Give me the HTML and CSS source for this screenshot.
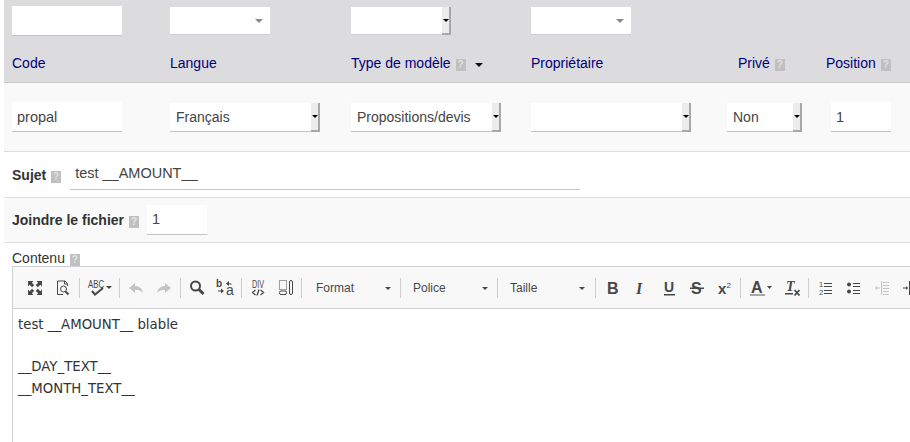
FILE: index.html
```html
<!DOCTYPE html>
<html lang="fr">
<head>
    <meta name="viewport" content="width=device-width, initial-scale=1">
    <title>Modèles d'emails</title>
    <link rel="stylesheet" href="styles.css">
</head>
<body>
    <div class="row cols filter-row">
        <input class="field field-code" type="text">
        <div class="pick pick-filter"><span class="pick-caret"></span></div>
        <div class="pick pick-filter pick-native"><span class="pick-btn"></span></div>
        <div class="pick pick-filter"><span class="pick-caret"></span></div>
    </div>
    <div class="row cols title-row">
        <a class="title">Code</a>
        <a class="title">Langue</a>
        <a class="title">Type de modèle <span class="help">?</span> <span class="sort-down"></span></a>
        <a class="title">Propriétaire</a>
        <a class="title title-prive">Privé <span class="help">?</span></a>
        <a class="title">Position <span class="help">?</span></a>
    </div>
    <div class="row cols value-row">
        <input class="field field-code" type="text" value="propal">
        <div class="pick pick-native pick-lang">Français<span class="pick-btn"></span></div>
        <div class="pick pick-native pick-lang">Propositions/devis<span class="pick-btn"></span></div>
        <div class="pick pick-native pick-owner"><span class="pick-btn"></span></div>
        <div class="pick pick-native pick-prive">Non<span class="pick-btn"></span></div>
        <input class="field field-pos" type="text" value="1">
    </div>
    <div class="row line-row">
        <label class="strong">Sujet <span class="help">?</span></label>
        <input class="field field-subject" type="text" value="test __AMOUNT__">
    </div>
    <div class="row line-row line-odd">
        <label class="strong">Joindre le fichier <span class="help">?</span></label>
        <input class="field field-join" type="text" value="1">
    </div>
    <div class="content-block">
        <div class="content-label">Contenu <span class="help">?</span></div>
        <div class="editor">
            <div class="toolbar">
                <span class="tool">
                    <svg viewBox="0 0 16 16"><path d="M1 1h5.500L4.800 2.700l2.400 2.400-2.100 2.100-2.400-2.400L1 6.500zM15 1H9.500l1.700 1.700-2.400 2.400 2.100 2.100 2.400-2.400L15 6.500zM1 15h5.500l-1.700-1.700 2.400-2.400-2.100-2.100-2.400 2.400L1 9.500zM15 15H9.500l1.700-1.700-2.400-2.400 2.100-2.100 2.400 2.400L15 9.500z"/></svg>
                </span>
                <span class="tool">
                    <svg viewBox="0 0 16 16"><path class="line" d="M12.500 6V3.500L10 1H2.500v13.500H8"/><path class="line" d="M9.500 1v3h3"/><circle class="line" cx="8.500" cy="9" r="3"/><path class="line thick" d="M10.500 11.500l3 3"/></svg>
                </span>
                <i class="sep sep-first"></i>
                <span class="tool tool-wide">
                    <svg class="icon-wide" viewBox="0 0 24 16"><text x="0" y="8" class="tiny" textLength="16" lengthAdjust="spacingAndGlyphs">ABC</text><path class="line check" d="M4 11l3 3.500L15 8"/><path class="mini" d="M18 6h6l-3 3z"/></svg>
                </span>
                <i class="sep"></i>
                <span class="tool off">
                    <svg viewBox="1 0 16 16"><path d="M1 8l6-5v3c4 0 7 2 8 7-2-2.500-4-3-8-3v3z"/></svg>
                </span>
                <span class="tool off">
                    <svg viewBox="2 0 16 16"><path d="M16 8l-6-5v3C6 6 3 8 2 13c2-2.500 4-3 8-3v3z"/></svg>
                </span>
                <i class="sep"></i>
                <span class="tool">
                    <svg viewBox="0 0 16 16"><circle class="line heavy" cx="5.500" cy="6" r="4.500"/><path class="line handle" d="M9 9.500l4.500 4.500"/></svg>
                </span>
                <span class="tool">
                    <svg viewBox="2 0 16 16"><text x="0" y="7" class="tiny-b">b</text><text x="10" y="15" class="big-a">a</text><path class="line" d="M15.500 4H11M2 11h4"/><path d="M13 1v5l-3-2.500zM5 8.500v5l3-2.500z"/></svg>
                </span>
                <i class="sep"></i>
                <span class="tool">
                    <svg viewBox="0 0 16 16"><text x="1" y="8" class="tiny" textLength="12" lengthAdjust="spacingAndGlyphs">DIV</text><path class="line thick-code" d="M4.500 10l-3 2.500 3 2.500M6 15.500l2-6M9.500 10l3 2.500-3 2.500"/></svg>
                </span>
                <span class="tool">
                    <svg viewBox="0 0 16 16"><path class="line dots" d="M.5.500h7v9h-7z"/><rect class="line" x=".5" y="11" width="7" height="3.500" rx="1.500"/><rect class="line" x="10.500" y=".5" width="3" height="14" rx="1.500"/></svg>
                </span>
                <i class="sep sep-tight"></i>
                <span class="combo combo-first">Format<span class="combo-arrow"></span></span>
                <i class="sep sep-tight"></i>
                <span class="combo">Police<span class="combo-arrow"></span></span>
                <i class="sep sep-tight"></i>
                <span class="combo">Taille<span class="combo-arrow"></span></span>
                <i class="sep"></i>
                <span class="tool"><svg viewBox="0 0 16 16"><text x="2" y="14" class="glyph-b">B</text></svg></span>
                <span class="tool"><svg viewBox="0 0 16 16"><text x="3" y="14" class="glyph-i">I</text></svg></span>
                <span class="tool"><svg viewBox="0 0 16 16"><text x="3" y="12" class="glyph-u">U</text><path d="M3 14h11v1.500H3z"/></svg></span>
                <span class="tool"><svg viewBox="0 0 16 16"><text x="2" y="14" class="glyph-b">S</text><path d="M1 7.500h14V9H1z"/></svg></span>
                <span class="tool"><svg viewBox="0 0 16 16"><text x="1" y="14" class="glyph-x">x</text><text x="9.500" y="8" class="glyph-sup">2</text></svg></span>
                <i class="sep"></i>
                <span class="tool tool-color">
                    <svg class="icon-color" viewBox="0 0 28 16"><text x="1" y="13" class="glyph-a">A</text><path class="color-bar" d="M0 14h15v2H0z"/><path class="mini" d="M17 6h5l-2.500 3z"/></svg>
                </span>
                <span class="tool"><svg viewBox="0 0 16 16"><text x="1" y="11" class="glyph-t">T</text><path d="M0 13h8v1.500H0z"/><path class="line thick" d="M9.500 10l5 5.500M14.500 10l-5 5.500"/></svg></span>
                <i class="sep"></i>
                <span class="tool"><svg viewBox="0 0 16 16"><text x="1" y="7" class="tiny-n">1</text><text x="1" y="15" class="tiny-n">2</text><path d="M6 3h8v1H6zM6 6h8v1H6zM6 10h8v1H6zM6 13h8v1H6z"/></svg></span>
                <span class="tool"><svg viewBox="0 0 16 16"><circle cx="3" cy="4.500" r="2"/><circle cx="3" cy="11.500" r="2"/><path d="M7 3h7v1H7zM7 6h7v1H7zM7 10h7v1H7zM7 13h7v1H7z"/></svg></span>
                <span class="tool off"><svg viewBox="0 0 16 16"><path d="M7 1h1v14H7zM9 2h6v1H9zM9 5h6v1H9zM9 8h6v1H9zM9 11h6v1H9zM9 14h6v1H9z"/><path d="M1 7.500h3V6l2 2-2 2V8.500H1z" transform="matrix(-1 0 0 1 7 0)"/></svg></span>
                <span class="tool dark"><svg viewBox="0 0 16 16"><path d="M7 1h1v14H7zM1 7.500h3V6l2 2-2 2V8.500H1zM9 2h6v1H9z"/></svg></span>
            </div>
            <div class="editor-body">
                <p>test __AMOUNT__ blable</p>
                <p>&nbsp;</p>
                <p>__DAY_TEXT__</p>
                <p>__MONTH_TEXT__</p>
            </div>
        </div>
    </div>
</body>
</html>
```

FILE: styles.css
```css
html, body {
    height: 100%;
}

body {
    margin: 0;
    padding-left: 4px;
    background-color: #fff;
    color: #333;
    font-family: "Liberation Sans", Arial, sans-serif;
    font-size: 14px;
    overflow: hidden;
}

.row {
    padding-left: 8px;
    box-sizing: border-box;
}

.cols {
    display: grid;
    grid-template-columns: 158px 181px 180px 196px 99px 84px;
    align-items: center;
}

.filter-row {
    height: 42px;
    background-color: #dcdcdf;
    align-items: start;
    padding-top: 6px;
}

.title-row {
    height: 41px;
    background-color: #dcdcdf;
    border-bottom: 1px solid #c8c8c8;
    padding-top: 1px;
}

.title {
    display: block;
    height: 16px;
    color: #000078;
    line-height: 16px;
    white-space: nowrap;
}

.title-prive {
    padding-left: 11px;
}

.value-row {
    height: 69px;
    background-color: #f9f9f9;
    border-bottom: 1px solid #ddd;
}

.value-row .field {
    padding-bottom: 0;
}

.line-row {
    display: flex;
    align-items: center;
    height: 46px;
    border-bottom: 1px solid #ddd;
}

.line-odd {
    height: 45px;
    background-color: #f9f9f9;
}

.strong {
    font-weight: 700;
    color: #333;
}

.help {
    display: inline-block;
    width: 10px;
    height: 12px;
    margin: 0 2px 0 1px;
    background-color: #c0c0c0;
    color: #e2e2e2;
    font-size: 10px;
    font-weight: 700;
    line-height: 12px;
    text-align: center;
    vertical-align: 0;
}

.sort-down {
    display: inline-block;
    margin-left: 4px;
    border-top: 4px solid #111;
    border-left: 4px solid transparent;
    border-right: 4px solid transparent;
    vertical-align: 1px;
}

.field {
    box-sizing: border-box;
    height: 30px;
    padding: 0 0 2px 5px;
    border: 0;
    border-bottom: 1px solid #c4c4c4;
    background-color: #fff;
    color: #444;
    font-family: inherit;
    font-size: 14.5px;
    outline: none;
}

.field-code {
    width: 110px;
}

.field-pos {
    width: 60px;
    margin-left: 5px;
}

.field-subject {
    width: 510px;
    margin-left: 7px;
    background-color: transparent;
}

.field-join {
    width: 60px;
    margin-left: 6px;
}

.pick {
    position: relative;
    box-sizing: border-box;
    height: 29px;
    padding-left: 6px;
    border-bottom: 1px solid #c4c4c4;
    background-color: #fff;
    color: #444;
    font-size: 14px;
    line-height: 29px;
    white-space: nowrap;
}

.pick-filter {
    width: 100px;
    height: 28px;
    margin-top: 1px;
    border-bottom-color: #d0d0d0;
}

.pick-lang {
    width: 150px;
}

.pick-owner {
    width: 160px;
}

.pick-prive {
    width: 75px;
}

/* fake native arrow, sits over the right end of the select */
.pick-btn {
    position: absolute;
    top: 0;
    right: 0;
    bottom: -1px;
    width: 7px;
    background-color: #ececec;
    border-right: 2px solid #a8a8a8;
    border-bottom: 2px solid #a8a8a8;
    box-sizing: content-box;
}

.pick-btn::after {
    content: "";
    position: absolute;
    top: 12px;
    left: 1px;
    border-top: 3px solid #000;
    border-left: 3px solid transparent;
    border-right: 3px solid transparent;
}

.pick-caret {
    position: absolute;
    top: 12px;
    right: 7px;
    border-top: 4px solid #888;
    border-left: 4px solid transparent;
    border-right: 4px solid transparent;
}

.content-block {
    padding-left: 8px;
}

.content-label {
    height: 23px;
    padding-top: 7px;
    box-sizing: border-box;
    font-size: 14px;
    line-height: 16px;
}

.editor {
    border-top: 1px solid #d1d1d1;
    border-left: 1px solid #d1d1d1;
    height: 176px;
    overflow: hidden;
}

.toolbar {
    display: flex;
    align-items: center;
    height: 41px;
    padding-left: 8px;
    background-color: #f8f8f8;
    border-bottom: 1px solid #d1d1d1;
    white-space: nowrap;
}

.tool {
    display: flex;
    flex: none;
    align-items: center;
    width: 28px;
    height: 16px;
    padding-left: 6px;
    box-sizing: border-box;
    color: #474747;
}

.tool svg {
    width: 16px;
    height: 16px;
    fill: #474747;
    overflow: visible;
}

.tool.off svg {
    fill: #c4c4c4;
}

.tool-wide {
    width: 35px;
    padding-left: 5px;
}

.tool-wide svg.icon-wide {
    width: 24px;
}

.tool-color {
    width: 35px;
}

.tool-color svg.icon-color {
    width: 28px;
}

.line {
    fill: none;
    stroke: #474747;
    stroke-width: 1;
}

.thick {
    stroke-width: 1.8;
}

.thick-code {
    stroke-width: 1.3;
}

.heavy {
    stroke-width: 2;
}

.handle {
    stroke-width: 3;
}

.check {
    stroke-width: 2;
}

.dots {
    stroke-dasharray: 1 1;
}

.mini {
    fill: #474747;
}

.color-bar {
    fill: #a8a8a8;
}

.tiny, .tiny-b, .tiny-n, .big-a, .glyph-b, .glyph-i, .glyph-u, .glyph-x, .glyph-sup, .glyph-a, .glyph-t {
    font-family: "Liberation Sans", Arial, sans-serif;
}

.tiny {
    font-size: 10.5px;
}

.tiny-b {
    font-size: 10px;
    font-weight: 700;
}

.tiny-n {
    font-size: 7.5px;
}

.big-a {
    font-size: 14px;
}

.glyph-b {
    font-size: 16px;
    font-weight: 700;
}

.glyph-i {
    font-family: "Liberation Serif", serif;
    font-size: 16px;
    font-style: italic;
    font-weight: 700;
}

.glyph-t {
    font-family: "Liberation Serif", serif;
    font-size: 14px;
    font-style: italic;
    font-weight: 700;
}

.glyph-u {
    font-size: 14px;
    font-weight: 700;
}

.glyph-x {
    font-size: 15px;
    font-weight: 700;
}

.glyph-sup {
    font-size: 8px;
}

.glyph-a {
    font-size: 16px;
    font-weight: 700;
}

.sep {
    flex: none;
    width: 1px;
    height: 20px;
    margin: 0 3px 0 1px;
    background-color: #cfcfcf;
}

.sep-first {
    margin-left: 2px;
}

.sep-tight {
    margin: 0;
}

.combo {
    position: relative;
    flex: none;
    box-sizing: border-box;
    width: 96px;
    padding-left: 12px;
    color: #484848;
    font-size: 12px;
}

.combo-first {
    width: 98px;
    padding-left: 14px;
}

.combo-arrow {
    position: absolute;
    top: 6px;
    right: 9px;
    border-top: 3px solid #474747;
    border-left: 3px solid transparent;
    border-right: 3px solid transparent;
}

.editor-body {
    padding: 5px 0 0 5px;
    background-color: #fff;
    color: #333;
    font-family: "DejaVu Sans", Verdana, sans-serif;
    font-size: 13.3px;
    line-height: 21.2px;
}

.editor-body p {
    margin: 0;
}
```
